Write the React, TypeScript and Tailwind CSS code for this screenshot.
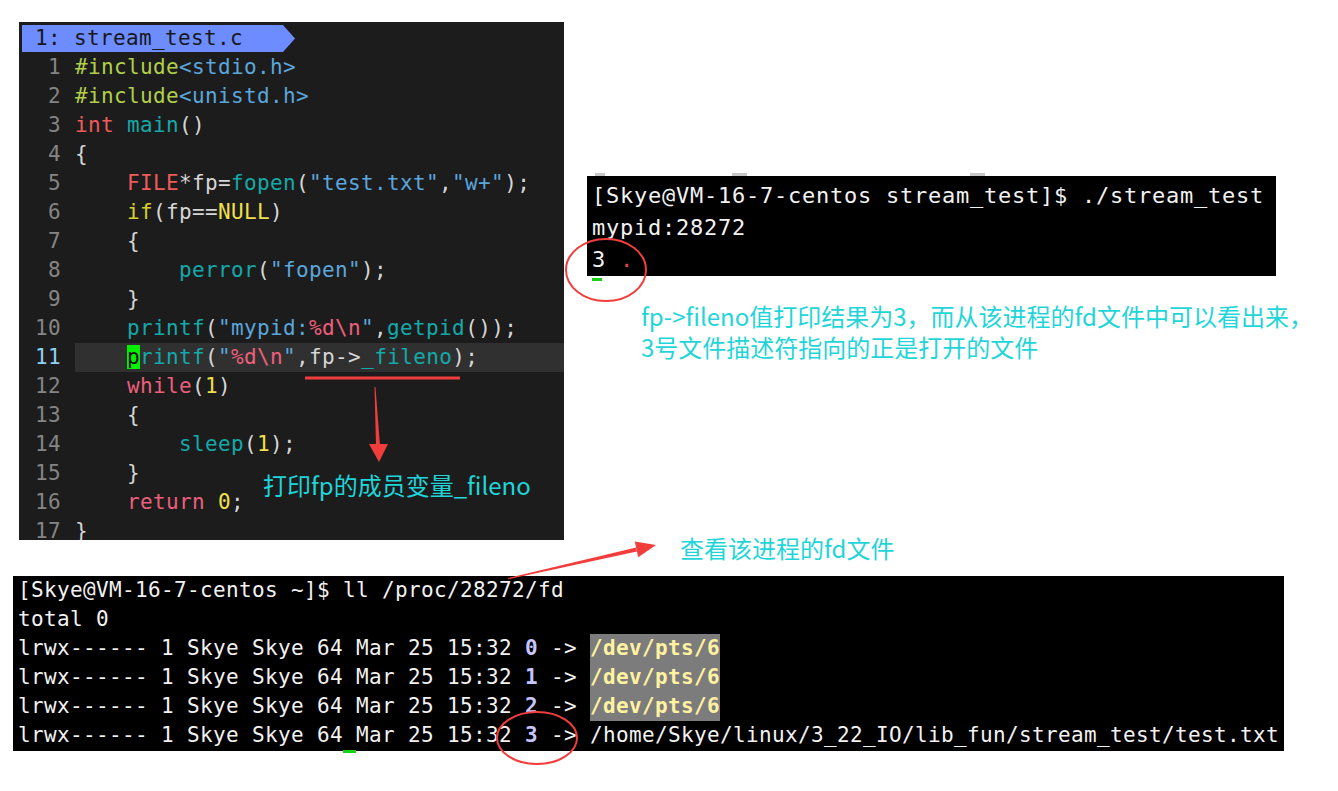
import React from "react";

type Tok = [string, string];

const P = "#d6d6d6";
const PRE = "#b1cf4b";
const STR = "#5ba6dc";
const KW = "#ef5b5b";
const KW2 = "#ec5f7c";
const FN = "#14a9a9";
const NUM = "#f0e04a";
const IFC = "#d6cf2b";
const ESC = "#ef5f7c";

const code: Tok[][] = [
  [["#include", PRE], ["<stdio.h>", STR]],
  [["#include", PRE], ["<unistd.h>", STR]],
  [["int", KW], [" ", P], ["main", FN], ["()", P]],
  [["{", P]],
  [["    ", P], ["FILE", KW], ["*fp=", P], ["fopen", FN], ["(", P], ['"test.txt"', STR], [",", P], ['"w+"', STR], [");", P]],
  [["    ", P], ["if", IFC], ["(fp==", P], ["NULL", NUM], [")", P]],
  [["    {", P]],
  [["        ", P], ["perror", FN], ["(", P], ['"fopen"', STR], [");", P]],
  [["    }", P]],
  [["    ", P], ["printf", FN], ["(", P], ['"mypid:', STR], ["%d\\n", ESC], ['"', STR], [",", P], ["getpid", FN], ["());", P]],
  [["    ", P], ["@p", FN], ["rintf", FN], ["(", P], ['"', STR], ["%d\\n", ESC], ['"', STR], [",fp->", P], ["_fileno", FN], [");", P]],
  [["    ", P], ["while", KW2], ["(", P], ["1", NUM], [")", P]],
  [["    {", P]],
  [["        ", P], ["sleep", FN], ["(", P], ["1", NUM], [");", P]],
  [["    }", P]],
  [["    ", P], ["return", KW2], [" ", P], ["0", NUM], [";", P]],
  [["}", P]],
];

function Editor() {
  return (
    <div className="relative w-[545px] h-[518px] shrink-0 bg-[#1c1c1c] overflow-hidden font-['DejaVu_Sans_Mono',monospace] text-[21px] tracking-[0.357px] whitespace-pre">
      <div className="pt-[3px] pl-[3px] h-[31px]">
        <div className="flex h-[27px]">
          <div className="w-[261px] h-full bg-[#6c8cff] pl-[13px] text-[#181818] leading-[27px]">1: stream_test.c</div>
          <svg width="12" height="27" viewBox="0 0 12 27">
            <polygon points="0,0 12,13.5 0,27" fill="#6c8cff" />
          </svg>
        </div>
      </div>
      {code.map((line, i) => {
        const cur = i === 10;
        return (
          <div key={i} className="flex h-[29px] leading-[29px]">
            <div className={`w-[42px] text-right ${cur ? "text-[#8fd0f5]" : "text-[#858585]"}`}>{i + 1}</div>
            <div className={`ml-[14px] flex-1 ${cur ? "bg-[#303030]" : ""}`}>
              {line.map(([t, c], j) =>
                t === "@p" ? (
                  <span key={j} className="bg-[#00f000] text-[#0a0a0a]">p</span>
                ) : (
                  <span key={j} style={{ color: c }}>{t}</span>
                )
              )}
            </div>
          </div>
        );
      })}
      <div className="absolute left-[244px] top-[448px] leading-[30px] text-[24px] tracking-normal text-[#1fd5d9] font-['Noto_Sans_CJK_SC',sans-serif]">
        打印fp的成员变量_fileno
      </div>
    </div>
  );
}

function TopTerminal() {
  return (
    <div className="relative w-[689px] h-[100px] bg-black pt-[4px] pl-[5px] font-['DejaVu_Sans_Mono',monospace] text-[22px] tracking-[0.755px] text-[#f2f2f2] whitespace-pre">
      <div className="absolute -top-[3px] left-[8px] w-[10px] h-[3px] bg-[#c8c8c8]" />
      <div className="absolute -top-[3px] left-[145px] w-[15px] h-[3px] bg-[#c8c8c8]" />
      <div className="absolute -top-[3px] left-[383px] w-[15px] h-[3px] bg-[#c8c8c8]" />
      <div className="leading-[32px]">[Skye@VM-16-7-centos stream_test]$ ./stream_test</div>
      <div className="leading-[32px]">mypid:28272</div>
      <div className="leading-[32px]">
        <span className="relative">
          3
          <span className="absolute left-0 -bottom-[9px] w-[10px] h-[3px] bg-[#19d019]" />
        </span>{" "}
        <span className="text-[#e04444]">.</span>
      </div>
    </div>
  );
}

const prefix = "lrwx------ 1 Skye Skye 64 Mar 25 15:32 ";

function FdRow({ n, last }: { n: string; last?: boolean }) {
  return (
    <div className="h-[29px] leading-[29px]">
      {last ? (
        <>
          {"lrwx------ 1 Skye Skye 64"}
          <span className="relative">
            {" "}
            <span className="absolute left-0 -bottom-[6px] w-[13px] h-[3px] bg-[#19d019]" />
          </span>
          {"Mar 25 15:32 "}
        </>
      ) : (
        prefix
      )}
      <span className="font-bold text-[#c6c6ff]">{n}</span>
      {" -> "}
      {last ? (
        "/home/Skye/linux/3_22_IO/lib_fun/stream_test/test.txt"
      ) : (
        <span className="inline-block h-[29px] bg-[#7c7c7c] font-bold text-[#fff2a0]">/dev/pts/6</span>
      )}
    </div>
  );
}

function BottomTerminal() {
  return (
    <div className="ml-[13px] mt-[14px] w-[1271px] h-[175px] bg-black pl-[5px] font-['DejaVu_Sans_Mono',monospace] text-[21px] tracking-[0.357px] text-[#f2f2f2] whitespace-pre">
      <div className="h-[29px] leading-[29px] -mt-[1px]">[Skye@VM-16-7-centos ~]$ ll /proc/28272/fd</div>
      <div className="h-[29px] leading-[29px]">total 0</div>
      <FdRow n="0" />
      <FdRow n="1" />
      <FdRow n="2" />
      <FdRow n="3" last />
    </div>
  );
}

export default function App() {
  return (
    <div className="relative w-[1338px] h-[791px] bg-white overflow-hidden">
      <div className="flex items-start pl-[19px] pt-[22px]">
        <Editor />
        <div className="ml-[23px] pt-[154px]">
          <TopTerminal />
          <div className="ml-[54px] mt-[24px] text-[24px] leading-[31px] text-[#1fd5d9] font-['Noto_Sans_CJK_SC',sans-serif] whitespace-nowrap">
            <div>fp-&gt;fileno值打印结果为3，而从该进程的fd文件中可以看出来，</div>
            <div>3号文件描述符指向的正是打开的文件</div>
          </div>
          <div className="ml-[93px] mt-[171px] h-[30px] text-[24px] leading-[30px] text-[#1fd5d9] font-['Noto_Sans_CJK_SC',sans-serif] whitespace-nowrap">
            查看该进程的fd文件
          </div>
        </div>
      </div>
      <BottomTerminal />

      <svg className="absolute inset-0 pointer-events-none" width="1338" height="791" viewBox="0 0 1338 791">
        <line x1="305" y1="378" x2="460" y2="378" stroke="#f23d3d" strokeWidth="3" />
        <polygon points="374.5,387 375.5,387 380,446 376,446" fill="#f23d3d" />
        <polygon points="369,444 388,444 379,462" fill="#f23d3d" />
        <polygon points="508,578 508.3,579.2 636.9,551.4 636.1,547.4" fill="#f23d3d" />
        <polygon points="656,545 634.8,541.6 638.2,557.2" fill="#f23d3d" />
        <ellipse cx="606" cy="270" rx="40" ry="31" fill="none" stroke="#f23d3d" strokeWidth="2" />
        <ellipse cx="537" cy="738" rx="40" ry="26" fill="none" stroke="#f23d3d" strokeWidth="2" />
      </svg>
    </div>
  );
}
